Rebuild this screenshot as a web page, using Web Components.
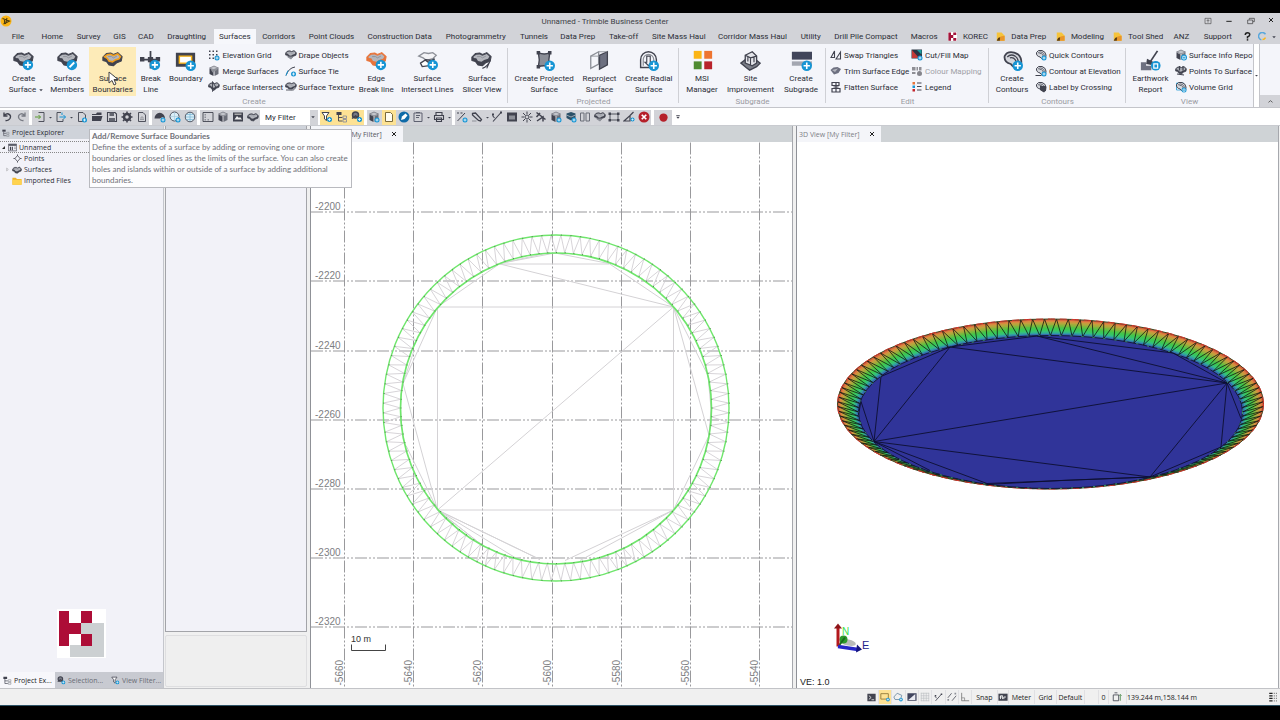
<!DOCTYPE html>
<html lang="en">
<head>
<meta charset="utf-8">
<title>Unnamed - Trimble Business Center</title>
<style>
  html { height: 100%; background: #000; }
  body { margin: 0; min-height: 100%; box-sizing: border-box; display: flex; font: 8px/11px Roboto, "Open Sans", sans-serif; color: #2b2d36; }
</style>
</head>
<body>
<tbc-app></tbc-app>
<script>
const D = '#41434f', G = '#8d9098', L = '#c3c5cb', B = '#1795d4', Y = '#fbb515', R = '#b5202a';

/* Icon parts, all on a 24-unit square */
const badge = (x = 17, y = 17, r = 6, k = 'plus') => `<circle cx="${x}" cy="${y}" r="${r}" fill="${B}"/>` + (
  k === 'plus' ? `<path d="M${x - r * .6} ${y}h${r * 1.2}M${x} ${y - r * .6}v${r * 1.2}" stroke="#fff" stroke-width="${r * .3}" fill="none"/>`
  : k === 'slash' ? `<path d="M${x - r * .45} ${y + r * .45}l${r * .9} ${-r * .9}" stroke="#fff" stroke-width="${r * .35}"/>`
  : `<path d="M${x - r * .4} ${y - r * .4}h${r * .8}v${r * .9}h${-r * .8}z" fill="none" stroke="#fff" stroke-width="${r * .25}"/>`);
const blob = (s = D, f = '#b4b6bd') => `<path d="M1 8 5 4l5-.5 3 1.500 5-2 5 4.500-1 5-5 2-4 3.500-5-1-3-4-4-1z" fill="${s}" stroke="${s}" stroke-width="1.200" stroke-linejoin="round"/><path d="M3 7.500l3-2 4-.5 3 1.500 5-2 3 3-1.500 2.500-4.500 1.500-3 2-4-1-2-3-3-.5z" fill="${f}"/><path d="M7 7.500h4l2 1.500 4-2" fill="none" stroke="${G}" stroke-width="1"/>`;
const ln = (d, c = D, w = 2) => `<path d="${d}" fill="none" stroke="${c}" stroke-width="${w}"/>`;
const fl = (d, c = D) => `<path d="${d}" fill="${c}"/>`;
const cube = fl('M3 6l9-4 9 4-9 4z', L) + fl('M3 7l8 4v11l-8-4z') + fl('M21 7l-8 4v11l8-4z', '#6c6f79') + ln('M3 6l9-4 9 4-9 4z', D, 1);
const page = ln('M5 3h9l5 5v13H5z', D, 1.8);
const curve = '<path d="M3 7q3-6 11-4 7 2 8 9 1 8-5 8-4 0-7-4-8-2-7-9z" fill="#d5d7dd" stroke="#41434f" stroke-width="2"/><path d="M6 8q4-4 9-1 4 3 4 9M9 9q4-1 6 2t1 5" fill="none" stroke="#41434f" stroke-width="1.400"/>';
const ICONS = {
  app: `<circle cx="12" cy="12" r="11" fill="${Y}"/><path d="M5 7l14 5-12 6M9 8v8M14 6l-3 12" fill="none" stroke="#4b3c10" stroke-width="2.200"/>`,
  surfAdd: blob() + badge(), surfEdit: blob() + badge(17, 17, 6, 'slash'), surfBound: blob() + ln('M3 7.500l3-2 4-.5 3 1.500 5-2 3 3-1.500 2.500-4.500 1.500-3 2-4-1-2-3z', '#f2a01c', 1.8),
  breakLine: ln('M1 11h21M12 1v20', D, 2) + fl('M0 8h5v5H0zM9 8h6v6H9zM18 8h5v5h-5z') + badge(),
  boundary: '<path d="M3 5h18v12H3z" fill="#fff" stroke="#41434f" stroke-width="4"/>' + ln('M5 7h14v8H5z', Y, 1.6) + badge(18, 18),
  edge: blob('#e8743a') + badge(), intersectLines: `<path d="M2 7l6-4 5 1 5-1 4 3-4 4-7 2-4-3z" fill="#f3f3f6" stroke="${G}" stroke-width="1.500"/><path d="M4 15l6-4 6 1 4-2-6 8-8 1z" fill="#fff" stroke="${D}" stroke-width="1.500"/>` + ln('M9 11l7 5') + badge(18, 17),
  slicer: blob() + ln('M13 21q6-2 9-9l-4 9', D, 1.3),
  projected: '<path d="M5 3q7 3 13 0-2 8 0 16-7-2-13 0 2-8 0-16z" fill="#8b8e97" stroke="#41434f" stroke-width="1.600"/>' + fl('M3 1h4v4H3zM16 1h4v4h-4zM3 17h4v4H3z') + badge(18, 18),
  reproject: `<path d="M2 7l9-5v14l-9 5z" fill="#f4f5fa" stroke="${G}" stroke-width="1.500"/><path d="M12 6l9-4v15l-9 5z" fill="#6d7080" stroke="${D}" stroke-width="1.500"/>` + ln('M2 7l10 0M11 2h10', G, 1),
  radial: ln('M3 20V11a9 9 0 0 1 18 0v9z', D, 1.6) + ln('M6 18v-7a6 6 0 0 1 12 0v7', G, 1.4) + ln('M10 7h4v7h2l-4 4-4-4h2z', D, 1.3) + badge(18, 18),
  msi: `<path d="M2 1h9v9H2z" fill="${Y}"/><path d="M14 1h9v9h-9z" fill="#ee7430"/><path d="M2 13h9v9H2z" fill="#4f8b31"/><path d="M14 13h9v9h-9z" fill="#b8232b"/>`,
  site: `<path d="M1 15l5-4h12l5 4-4 4-8 4-4-3z" fill="#7b7e88" stroke="${D}" stroke-width="1.500"/><path d="M6 6l8-4 5 5v8l-5 3-8-3z" fill="#e4e5ea" stroke="${D}" stroke-width="1.500"/>` + ln('M6 6l6 3 7-2M12 9v8M9 7v6M16 8v6', D, 1.3),
  subgrade: fl('M1 2h23v9H1z', '#41455a') + fl('M1 13h23v5H1z', '#a4a7b1') + badge(18, 18),
  contours: curve + badge(18, 18),
  earthwork: fl('M1 14h6v4h6v5H1z', '#6d7080') + ln('M20 1l-8 12', D, 2) + fl('M8 10l8 4-3 3-6-1z') + badge(18, 18, 5.5, 'box'),
  grid: fl('M2 3h3v3H2zM9 3h3v3H9zM16 3h3v3h-3zM2 10h3v3H2zM9 10h3v3H9zM16 10h3v3h-3zM2 17h3v3H2zM9 17h3v3H9z') + badge(18, 18, 5),
  merge: cube + fl('M6 10l12-4v4l-9 5z', G), surfInt: blob() + ln('M9 1v20l7-8z', D, 1.8),
  drape: blob() + fl('M3 15h14l-5 6z', G), tie: ln('M2 21Q7 6 20 4', D, 2) + ln('M2 21l4-10', B, 2) + badge(17, 18, 5), texture: blob() + ln('M2 18h14l5-5', G, 3),
  swap: ln('M2 17L9 4v13zM12 20L21 6v14z', D, 2.2), trim: fl('M1 10l6-5 8-1 7 4-5 8-9 3z', '#6d7080') + fl('M4 10l12-3-6 7z', '#b3b5bd'), flatten: ln('M4 3h14v6H4zM4 15h16v7H4zM12 3v18M7 12h10', D, 2.4),
  cutfill: fl('M1 1h21v18H1z', '#2a3443') + fl('M2 2l14 16H2z', '#c43a37') + fl('M12 2h9v9z', '#19a0a0') + badge(18, 18, 5), colmap: fl('M2 4h7v7H2zM11 4h3v7h-3zM16 4h5v7h-5zM2 14h7v4H2z', '#8f8f95') + `<circle cx="17" cy="17" r="5" fill="#85858c"/>`,
  legend: fl('M3 2h5v5H3z', '#e8743a') + fl('M3 9h5v5H3z', B) + fl('M3 16h5v5H3z', '#c3252d') + ln('M12 4h9M12 11h9M12 18h9', D, 2),
  quick: curve + badge(18, 18, 5), label: curve + fl('M10 10h12v9l-4 4-8-5z'), elev: curve + ln('M1 21h12') + badge(18, 18, 5),
  info: cube + badge(18, 17, 6, 'box'), points: blob() + ln('M9 2v9M16 2v9M4 18l14 2', D, 2.4), volume: `<path d="M3 4h14v14H3z" fill="#fff" stroke="${B}" stroke-width="1.500"/>` + curve + badge(18, 18, 5, 'box'),
  undo: ln('M6 3v7h7M6 10Q10 4 15 6q6 3 3 9-3 5-9 4', D, 2.8), redo: ln('M18 3v7h-7M18 10Q14 4 9 6q-6 3-3 9 3 5 9 4', '#777a83', 2.6),
  importF: ln('M9 3h11v18H9', D, 1.8) + ln('M2 12h11M9 8l4 4-4 4', '#5c9a33', 2), exportF: ln('M12 3H4v18h12v-5', D, 1.8) + ln('M9 12h12M17 8l4 4-4 4M14 3v5', B, 2), newF: page + badge(17, 18, 5),
  open: fl('M2 6h8l2-3h9v5H2zM2 10h21l-3 10H2z'), save: ln('M3 3h15l3 3v15H3z', D, 2.2) + fl('M7 3h9v7H7zM6 14h12v7H6z', '#62656f'), gear: `<circle cx="12" cy="12" r="6" fill="none" stroke="${D}" stroke-width="5"/>` + ln('M12 1v4M12 19v4M1 12h4M19 12h4M4 4l3 3M17 17l3 3M20 4l-3 3M4 20l3-3', D, 3), report: page + ln('M8 17h8M10 17v-5h4v5', G, 1.6),
  dome: fl('M1 15a10 11 0 0 1 21 0l-5-3-5 3z') + badge(18, 18, 5), globeAdd: '<circle cx="11" cy="11" r="9" fill="#d9edf7" stroke="#41434f" stroke-width="1.800"/>' + ln('M2 11h18M11 2v18', '#9fc4d8', 1.2) + badge(18, 18, 5), globe: '<circle cx="12" cy="12" r="9.500" fill="#d9edf7" stroke="#41434f" stroke-width="1.800"/>' + ln('M3 12h18M12 3v18M5 7h14M5 17h14', '#6fb0d2', 1.3),
  planv: ln('M2 3h20v18H2z', D, 1.8) + fl('M5 6h3v3H5zM5 11h3v3H5zM5 16h3v3H5zM11 16h3v3h-3z', G), cube, photo: fl('M2 3h20v18H2z') + fl('M5 17l5-7 4 4 2-2 4 5z', '#eee') + fl('M5 5h14v3H5z', '#aaa'), surf: '<g transform="translate(0 2)">' + blob() + '</g>',
  funnel: '<path d="M2 3h14l-5 7v9l-4-3v-6z" fill="#fff" stroke="#41434f" stroke-width="2"/>' + badge(17, 17, 5), tree: fl('M1 2h10v6H1z') + ln('M5 8v12h8M5 13h8', D, 1.8) + ln('M14 10h7v5h-7zM14 17h7v5h-7z', G, 1.8), select: '<circle cx="9" cy="8" r="6" fill="#777a85" stroke="#41434f" stroke-width="3"/>' + ln('M2 15l7-5 8 5', D, 3) + badge(17, 17, 5),
  cubeAdd: cube + badge(18, 18, 5), note: '<path d="M5 3h10l4 4v14H5z" fill="#fffdf3" stroke="#7b6a3a" stroke-width="2"/>', pen: '<circle cx="12" cy="12" r="11" fill="#0e6aa8"/>' + fl('M6 18l2-7 7-6 4 4-6 7z', '#fff'),
  clip: ln('M4 4h16v17H4zM8 3h8M8 9h8M8 13h6', '#5e6170', 2), print: ln('M6 9V3h12v6M3 9h18v8H3zM7 14h10v7H7z', D, 2.2),
  ptline: ln('M3 20L18 4M2 4h4M9 4h4', D, 2) + badge(18, 18, 5), pencil: ln('M3 5l6-1 12 13-2 3-4-1L3 8z', D, 2.6) + ln('M2 20h9', G, 2), vec: ln('M4 21L20 3M3 9l4 5', D, 2.2) + fl('M2 5h4v4H2zM18 1h4v4h-4z'),
  box: fl('M2 3h20v18H2z') + fl('M6 9h12v8H6z', G), burst: '<circle cx="12" cy="12" r="4" fill="none" stroke="#41434f" stroke-width="2"/>' + ln('M12 1v5M12 18v5M1 12h5M18 12h5M4 4l4 4M16 16l4 4M20 4l-4 4M4 20l4-4', D, 2), measure: ln('M3 3l18 14M3 12l7-8M4 20l12-8v9', D, 3), cubes: fl('M3 5l9-3 9 3v9l-9 5-9-5z', '#2b5068') + ln('M3 8l9 4 9-4', L, 1.5) + badge(18, 18, 5),
  book: ln('M3 4h7v16H3zM14 4h7v16h-7z', '#6b6e79', 2), frame: ln('M4 6h16v12H4z', D, 1.8) + fl('M1 3h5v5H1zM18 3h5v5h-5zM1 16h5v5H1zM18 16h5v5h-5z'), chart: ln('M2 20h12V9zM14 9l7-7', D, 2.4) + badge(19, 17, 4),
  stop: `<circle cx="12" cy="12" r="11" fill="${R}"/>` + ln('M7.500 7.500l9 9M16.500 7.500l-9 9', '#fff', 3.4), rec: `<circle cx="12" cy="12" r="9" fill="${R}"/>`,
  drop: fl('M5 9h14l-7 8z'), more: fl('M5 4h14v3H5zM5 11h14l-7 8z'),
  korec: '<path d="M0 0h24v24H0z" fill="#fff"/>' + fl('M1 1h7v22H1zM8 8h6v8H8zM14 1h8v7h-8zM14 16h8v7h-8z', '#a3143a'), macro: fl('M2 1h13l8 9v13H2z', '#f6c33b') + fl('M12 12l11-2v13H8z', '#e9952a') + fl('M2 23q3-9 9-9l-1 9z', '#5a3a12'),
  help: ln('M6 8q0-6 6-6t6 5q0 4-6 6v4', '#222', 4) + fl('M10 19h4v4h-4z', '#222'), sync: ln('M20 6A10 10 0 1 0 9 21', '#58a7dc', 4) + ln('M12 20q5 0 8-5', Y, 4),
  wup: ln('M3 4h18v16H3zM12 17V8M8 12l4-4 4 4', '#333', 1.6), wmin: ln('M4 13h16', '#222', 3), wmax: ln('M7 8V4h15v10h-4M2 9h15v11H2z', '#333', 2), wclose: ln('M4 4l16 16M20 4L4 20', '#222', 4), up: ln('M5 15l7-6 7 6', '#555', 3),
  diamond: ln('M12 4l7 8-7 8-7-8zM12 1v4M12 19v4M1 12h5M18 12h5', D, 2), folder: fl('M1 4h8l3 3h11v14H1z', '#f0b429') + fl('M1 9h22v12H1z', '#ffd34f'), project: ln('M1 3h22v18H1z', D, 1.8) + fl('M2 3h20v4H2zM5 10h3v9H5zM10 10h3v9h-3z') + ln('M16 11h5M16 15h5', G, 2), open3: fl('M19 5v14H5z', '#222'), closed3: ln('M8 5l8 7-8 7z', '#888', 2),
  term: fl('M1 2h22v20H1z') + ln('M5 7l6 5-6 5M12 18h7', '#fff', 2), selrect: ln('M2 4h18v13H2z', '#8b7434', 2) + badge(19, 18, 4.5), selpoly: ln('M2 12l8-9 11 5-3 10H5z', '#6a88a0', 2) + badge(19, 18, 4.5), half: fl('M1 3h22v18H1z', '#42465f') + fl('M3 19L20 5v14z', '#e9eaf2'), meshg: ln('M3 2v20M9 2v20M15 2v20M21 2v20M2 3h20M2 9h20M2 15h20M2 21h20', '#b9bbc0', 1.4),
  par: ln('M2 14l9-11M12 21l10-12', D, 1.8) + fl('M1 17h4v4H1zM18 2h4v4h-4z', G), perp: ln('M4 2v19h18', '#777', 2) + ln('M4 14h7v7', '#777', 1.6), snap2: fl('M1 4h22v17H1z') + ln('M6 17V9h5v8M14 17v-5h5M4 12h5', '#fff', 2), coord: ln('M3 7h13v14H3zM6 2h7', D, 2) + ln('M20 6v15M17 9l3-3 3 3', '#4c8c4c', 2), gripi: fl('M3 2h8v3H3zM3 8h8v3H3zM3 14h8v3H3zM3 20h8v3H3z', '#222') + fl('M14 2h2v3h-2zM14 8h2v3h-2zM14 14h2v3h-2zM14 20h2v3h-2zM19 2h2v3h-2zM19 8h2v3h-2zM19 14h2v3h-2zM19 20h2v3h-2z', '#666')
};

/* Base class: renders its template into an open shadow root */
class View extends HTMLElement {
  connectedCallback() {
    if (this.shadowRoot) return;
    this.attachShadow({ mode: 'open' }).innerHTML = `<style>:host{display:block;box-sizing:border-box}*{box-sizing:border-box}button,a,select,input{font:inherit;color:inherit;background:none;border:0;margin:0;padding:0;text-decoration:none;white-space:nowrap}${this.css()}</style>${this.html()}`;
  }
  css() { return ''; }
  html() { return '<slot></slot>'; }
  at(n, d = '') { return this.getAttribute(n) ?? d; }
}
const def = (n, c) => customElements.define(n, c);
const ic = (n, s = 12) => `<tbc-icon name="${n}" size="${s}"></tbc-icon>`;

def('tbc-icon', class extends View {
  css() { return `:host{width:${this.at('size', 12)}px;height:${this.at('size', 12)}px;flex:none}svg{display:block;width:100%;height:100%}`; }
  html() { return `<svg viewBox="0 0 24 24" aria-hidden="true">${ICONS[this.at('name')] || ''}</svg>`; }
});

def('tbc-title', class extends View {
  css() { return `:host{background:#d2d3d8;height:16px;display:grid;grid-template-columns:36px 1fr 100px;align-items:center;padding-right:6px}
    :host>*{min-width:0}.t{text-align:center;color:#3c3e46}nav{display:flex;justify-content:space-between;padding-left:30px}button{display:flex}`; }
  html() { return `${ic('app', 12)}<div class="t">Unnamed - Trimble Business Center</div><nav>
    <button aria-label="Ribbon options">${ic('wup', 8)}</button><button aria-label="Minimise">${ic('wmin', 8)}</button><button aria-label="Restore">${ic('wmax', 8)}</button><button aria-label="Close">${ic('wclose', 6)}</button></nav>`; }
});

def('tbc-tabs', class extends View {
  css() { return `:host{background:#d2d3d8;height:15px;display:flex;padding:0 3px 0 2px}
    a{flex:var(--w) 1 0;min-width:0;display:flex;align-items:center;justify-content:center;gap:6px;height:15px}a.on{background:#f6f7fb}`; }
  html() {
    const T = [['File', 32], ['Home', 37], ['Survey', 36], ['GIS', 26], ['CAD', 27], ['Draughting', 55], ['Surfaces', 42], ['Corridors', 46], ['Point Clouds', 60], ['Construction Data', 77], ['Photogrammetry', 76], ['Tunnels', 41], ['Data Prep', 47], ['Take-off', 45], ['Site Mass Haul', 66], ['Corridor Mass Haul', 82], ['Utility', 35], ['Drill Pile Compact', 76], ['Macros', 41], ['KOREC', 47, 'korec'], ['Data Prep', 60, 'macro'], ['Modeling', 58, 'macro'], ['Tool Shed', 59, 'macro'], ['ANZ', 28], ['Support', 45], ['', 14, 'help', 'Help'], ['', 17, 'sync', 'Updates'], ['', 6, 'drop', 'More']];
    return T.map(t => `<a href="#" style="--w:${t[1]}" class="${t[0] === 'Surfaces' ? 'on' : ''}" ${t[3] ? `aria-label="${t[3]}"` : ''}>${t[2] ? ic(t[2], t[2] === 'drop' ? 6 : 9) : ''}${t[0]}</a>`).join('');
  }
});

def('tbc-group', class extends View {
  css() { return `:host{flex:var(--w) 1 0;min-width:0;display:grid;grid-template-rows:50px 11px;padding:2px 0 1px;position:relative}
    :host::after{content:"";position:absolute;right:0;top:4px;bottom:4px;width:1px;background:#cfd0d5}
    :host([last])::after{display:none}
    .r{display:flex;min-width:0;padding:0 2px}.l{text-align:center;color:#9a9ba1}`; }
  html() { return `<div class="r"><slot></slot></div><div class="l">${this.at('label')}</div>`; }
});
def('tbc-big', class extends View {
  css() { return `:host{flex:var(--w) 1 0;min-width:0}button{width:100%;height:49px;display:flex;flex-direction:column;align-items:center;gap:2px;padding-top:3px;margin-top:1px;line-height:11px}
    :host([on]) button{background:#fdebb8}span{display:block;text-align:center}.d{display:flex;align-items:center;justify-content:center;gap:2px;margin-right:-6px}`; }
  html() {
    const p = this.at('text').split('|');
    return `<button>${ic(this.at('icon'), 21)}<span>${p[0]}${p[1] ? (this.hasAttribute('menu') ? `<span class="d">${p[1]}${ic('drop', 6)}</span>` : '<br>' + p[1]) : ''}</span></button>`;
  }
});
def('tbc-small', class extends View {
  css() { return `:host{flex:var(--w) 1 0;min-width:0;padding-top:1px}button{display:flex;align-items:center;gap:2px;height:16px;padding-left:2px}button.off{color:#a0a1a7}`; }
  html() { return this.at('items').split(';').map(s => { const [i, t] = s.split(','); return `<button class="${i === 'colmap' ? 'off' : ''}">${ic(i, 12)}${t}</button>`; }).join(''); }
});

def('tbc-ribbon', class extends View {
  css() { return `:host{background:#f4f5fa;height:64px;display:flex;border-bottom:1px solid #c4c5ca}
    .more{width:7px;display:flex;align-items:center;background:#fff;border-right:1px solid #c4c5ca;border-left:1px solid #c4c5ca}
    .end{width:20px;display:flex;align-items:flex-end}.end button{width:20px;height:12px;background:#d2d3d8;display:flex;align-items:center;justify-content:center}`; }
  html() {
    const big = (w, i, t, x = '') => `<tbc-big style="--w:${w}" icon="${i}" text="${t}" ${x}></tbc-big>`;
    const sm = (w, s) => `<tbc-small style="--w:${w}" items="${s}"></tbc-small>`;
    return `<tbc-group label="Create" style="--w:508">${big(43, 'surfAdd', 'Create|Surface', 'menu')}${big(44, 'surfEdit', 'Surface|Members')}${big(47, 'surfBound', 'Surface|Boundaries', 'on')}${big(29, 'breakLine', 'Break|Line')}${big(41, 'boundary', 'Boundary')}
      ${sm(76, 'grid,Elevation Grid;merge,Merge Surfaces;surfInt,Surface Intersect')}${sm(73, 'drape,Drape Objects;tie,Surface Tie;texture,Surface Texture')}${big(41, 'edge', 'Edge|Break line')}${big(61, 'intersectLines', 'Surface|Intersect Lines')}${big(48, 'slicer', 'Surface|Slicer View')}</tbc-group>
      <tbc-group label="Projected" style="--w:171">${big(68, 'projected', 'Create Projected|Surface')}${big(42, 'reproject', 'Reproject|Surface')}${big(56, 'radial', 'Create Radial|Surface')}</tbc-group>
      <tbc-group label="Subgrade" style="--w:147">${big(42, 'msi', 'MSI|Manager')}${big(55, 'site', 'Site|Improvement')}${big(46, 'subgrade', 'Create|Subgrade')}</tbc-group>
      <tbc-group label="Edit" style="--w:163">${sm(81, 'swap,Swap Triangles;trim,Trim Surface Edge;flatten,Flatten Surface')}${sm(78, 'cutfill,Cut/Fill Map;colmap,Colour Mapping;legend,Legend')}</tbc-group>
      <tbc-group label="Contours" style="--w:137">${big(42, 'contours', 'Create|Contours')}${sm(91, 'quick,Quick Contours;elev,Contour at Elevation;label,Label by Crossing')}</tbc-group>
      <tbc-group label="View" style="--w:127" last>${big(45, 'earthwork', 'Earthwork|Report')}${sm(78, 'info,Surface Info Repo;points,Points To Surface;volume,Volume Grid')}</tbc-group>
      <button class="more" aria-label="Scroll ribbon">${ic('drop', 5)}</button><div class="end"><button aria-label="Collapse ribbon">${ic('up', 7)}</button></div>`;
  }
});

def('tbc-toolbar', class extends View {
  css() { return `:host{background:#fff;height:18px;display:flex;align-items:center;padding-top:1px;border-bottom:1px solid #c9cbd0}
    .s{display:flex;width:var(--w);height:15px;background:#d2d3d8;margin-right:3px}.y,.s.y{background:#fde294}
    button{flex:15 1 0;min-width:0;display:flex;align-items:center;justify-content:center}button.a{flex-grow:6}
    select{appearance:none;width:47px;height:15px;padding-left:2px;background:#fff}.d{width:8px;height:15px;display:flex;align-items:center;background:#d2d3d8;margin-right:2px}`; }
  html() {
    const seg = (w, s, c = '') => `<div class="s ${c}" style="--w:${w}px">${s.split(' ').map(n => n === '-' ? `<button class="a" aria-label="Options">${ic('drop', 5)}</button>` : `<button class="${n === 'note' ? 'y' : ''}" aria-label="${n}">${ic(n, n === 'rec' ? 11 : 12)}</button>`).join('')}</div>`;
    return seg(29, 'undo redo') + seg(117, 'importF - exportF - newF open save gear report') + seg(45, 'dome globeAdd globe') + seg(60, 'planv cube photo surf') +
      `<select aria-label="View filter"><option>My Filter</option></select><span class="d">${ic('drop', 6)}</span>` +
      seg(44, 'funnel tree select', 'y') + seg(85, 'cubeAdd note pen clip - print -') + seg(196, 'ptline pencil - vec box burst measure cubeAdd cubes book drape frame chart stop') + seg(18, 'rec') + ic('more', 6);
  }
});

def('tbc-pane-head', class extends View {
  css() { return `:host{display:flex;align-items:center;gap:2px;height:13px;flex:none;background:#cfd3da;padding-left:2px;font:7px/11px "Open Sans",sans-serif}`; }
  html() { return `${ic('tree', 8)}<slot></slot>`; }
});

def('tbc-explorer', class extends View {
  css() { return `:host{display:flex;flex-direction:column;background:#f2f2f8;font:7px/11px "Open Sans",sans-serif;border-right:1px solid #c4c6cc;min-width:0}
    ul{list-style:none;margin:2px 0 0;padding:0;flex:1}li{display:flex;align-items:center;height:11px;gap:2px;padding-left:var(--p)}li.sel{border-block:1px dotted #888;height:12px}
    .logo{display:block;width:49px;height:49px;margin:0 0 14px 57px}
    nav{display:flex;height:16px;background:#c8cad1}nav button{flex:54 1 0;min-width:0;display:flex;align-items:center;gap:2px;padding:0 2px;color:#6a6c75;overflow:hidden}nav button.on{background:#f7f7fb;color:#222;padding-left:3px}`; }
  html() { return `<tbc-pane-head>Project Explorer</tbc-pane-head>
    <ul><li class="sel" style="--p:1px">${ic('open3', 5)}${ic('project', 9)}Unnamed</li><li style="--p:13px">${ic('diamond', 9)}Points</li><li style="--p:5px">${ic('closed3', 5)}${ic('surf', 10)}Surfaces</li><li style="--p:12px">${ic('folder', 10)}Imported Files</li></ul>
    <svg class="logo" viewBox="0 0 49 49" role="img" aria-label="KOREC"><path d="M0 0h49v49H0z" fill="#fff"/><path d="M24 14h23v34H13V36h11z" fill="#ccd0d2"/><path d="M2 2h10v12h12v11H12v12H2zM24 2h11v12H24zM24 25h11v12H24z" fill="#ad0d37"/></svg>
    <nav><button class="on">${ic('tree', 9)}Project Ex...</button><button>${ic('select', 9)}Selection...</button><button>${ic('funnel', 9)}View Filter...</button></nav>`; }
});

def('tbc-props', class extends View {
  css() { return `:host{display:grid;grid-template-rows:1fr 52px;gap:3px;background:#f0f0f0;padding:0 3px 1px 1px;min-width:0}
    .a{background:#f2f2f8;border:1px solid #a3a4a9;border-top:0}.b{background:#efefef;border:1px solid #dedee0;border-radius:2px}`; }
  html() { return `<div class="a"><tbc-pane-head></tbc-pane-head></div><div class="b"></div>`; }
});

def('tbc-view', class extends View {
  css() { return `:host{display:flex;flex-direction:column;min-width:0;background:#fff;border-left:1px solid #8f9197;border-right:1px solid #a6a8ad}
    header{height:16px;flex:none;display:flex;background:#cfd3d6}header div{display:flex;align-items:center;gap:9px;background:#f4f5f9;color:var(--c);font:7px/11px "Open Sans",sans-serif;padding:0 6px 0 var(--pl)}
    button{display:flex}.c{flex:1;min-height:0;display:flex}`; }
  html() { return `<header><div>${this.at('label')}<button aria-label="Close view">${ic('wclose', 6)}</button></div></header><div class="c"><slot></slot></div>`; }
});

def('tbc-plan', class extends View {
  css() { return `:host{flex:1;min-width:0}svg{display:block;width:100%;height:100%}text{font:10px "Liberation Sans",sans-serif;fill:#7d7e82}`; }
  html() {
    const N = 112, cx = 556, cy = 407.5, pt = (r, k) => [(cx + r * Math.cos(k * 2 * Math.PI / N)).toFixed(1), (cy + r * Math.sin(k * 2 * Math.PI / N)).toFixed(1)];
    let g = '', z = '', dots = '';
    [344.5, 413.5, 482.5, 552.5, 621.5, 690.5, 759.5].forEach((x, i) => { g += `<path d="M${x} 142V687"/>`; z += `<text transform="translate(${x - 2} 685) rotate(-90)">-${5660 - 20 * i}</text>`; });
    [211.5, 280.5, 350.5, 419.5, 488.5, 557.5, 626.5].forEach((y, i) => { g += `<path d="M311 ${y}H792"/>`; z += `<text x="315" y="${y - 2}">-${2200 + 20 * i}</text>`; });
    let d = '';
    for (let k = 0; k < N; k++) { d += `${k ? 'L' : 'M'}${pt(155.5, k)}L${pt(173, k + .5)}`; dots += `<path d="M${pt(173, k + .5)}h1M${pt(155.5, k)}h1"/>`; }
    return `<svg viewBox="311 142 481 545" preserveAspectRatio="xMidYMid meet" role="img" aria-label="Plan view of the surface">
      <g stroke="#99999c" stroke-dasharray="12 2 2 2 2 2" fill="none">${g}</g>${z}
      <g stroke="#d4d2d5" fill="none"><path d="${d}z" stroke="#cdc9ce" stroke-width=".8"/>
      <path d="M437.500 306.500h236v203h-236zM437.500 509.500L673.500 306.500M500 263.500h109M500 263.500L673.500 306.500L609 263L555 252.500L500 263L437.500 306.500L403 383L437.500 509.500L406 445M437.500 509.500L480 543L437.500 509.500L540 559L437.500 509.500L515 557M673.500 306.500L709 435L673.500 509.500L565 560M673.500 509.500L580 560M673.500 306.500L708 375L711 408L709 435M403 383L414 350M500 263l50-11"/></g>
      <g fill="none" stroke="#6fe66c" stroke-width="1.400"><circle cx="${cx}" cy="${cy}" r="173"/><circle cx="${cx}" cy="408" r="155.500" stroke-width="1.700"/></g><g stroke="#4f8f4a">${dots}</g>
      <text x="351" y="641" style="font-size:9px;fill:#333">10 m</text><path d="M351.500 644v6h34v-6" fill="none" stroke="#444"/></svg>`;
  }
});

def('tbc-scene', class extends View {
  css() { return `:host{flex:1;min-width:0}svg{display:block;width:100%;height:100%}text{font:9px "Liberation Sans",sans-serif}`; }
  html() {
    const N = 112, O = [1050.5, 403.5, 213, 85], I = [1050.5, 411.5, 192, 76.5];
    const mix = t => O.map((v, i) => v + (I[i] - v) * t), P = (e, k) => { const a = k * 2 * Math.PI / N - Math.PI / 2; return [(e[0] + e[2] * Math.cos(a)).toFixed(1), (e[1] + e[3] * Math.sin(a)).toFixed(1)]; };
    const cols = ['#d8603c', '#d98a40', '#bfa23e', '#a0ac3c', '#7ab83e', '#55c044', '#3fc650', '#38c760', '#35c07c', '#33a0a0', '#3468b0', '#303499'];
    const rings = cols.map((c, i) => { const e = mix(i / 11); return `<ellipse cx="${e[0].toFixed(1)}" cy="${e[1].toFixed(1)}" rx="${e[2].toFixed(1)}" ry="${e[3].toFixed(1)}" fill="${c}"/>`; }).join('');
    let d = '';
    for (let k = 0; k < N; k++) d += `${k ? 'L' : 'M'}${P(I, k)}L${P(O, k + .5)}`;
    const el = (e, x) => `<ellipse cx="${e[0]}" cy="${e[1]}" rx="${e[2]}" ry="${e[3]}" fill="none" ${x}/>`;
    return `<svg viewBox="797 142 481 545" preserveAspectRatio="xMidYMid meet" role="img" aria-label="3D view of the surface">
      ${rings}<path d="${d}z" fill="none" stroke="#10180f" stroke-width=".8"/>
      ${el(O, 'stroke="#3a4420" stroke-width="1"')}${el(O, 'stroke="#d8352c" stroke-width="1" stroke-dasharray="7 5"')}${el(I, 'stroke="#141a3a" stroke-width="1"')}${el(I, 'stroke="#3a9a6a" stroke-dasharray="2 9"')}
      <path d="M874 441L1227 382.500L950 346.500L874 441L881 376M874 441L861 401L858.500 414M1227 382.500L1037 335.500L1173 352.500L1227 382.500L1150 476.500L1221 446.500L1227 382.500L1241 418M874 441L1150 476.500L987 483L874 441L930 470M881 376L950 346.500L1037 335.500M987 484L1060 480L1150 476.500" fill="none" stroke="#0c0e30" stroke-width=".9"/>
      <ellipse cx="848" cy="642" rx="8" ry="3" fill="#b9bbb9" transform="rotate(12 848 642)"/><circle cx="843.500" cy="639" r="4" fill="#2d9a2b"/><path d="M839 645l6-8" stroke="#176d1a" stroke-width="2"/>
      <path d="M838 646v-19" stroke="#b3181c" stroke-width="3"/><path d="M834 628l4-5 4 5z" fill="#8e1418"/><path d="M838 646l20 3" stroke="#2626c8" stroke-width="3.500"/><path d="M857 644l5 5-6 3z" fill="#15157e"/>
      <text x="842" y="634" style="font-size:10px;fill:#3ce04a">N</text><text x="862" y="648" style="font-size:11px;fill:#22228c">E</text><text x="800" y="684" fill="#222">VE: 1.0</text></svg>`;
  }
});

def('tbc-tip', class extends View {
  css() { return `:host{position:absolute;left:89px;top:3px;width:263px;padding:1px 2px;background:#fdfdfe;border:1px solid #b9babf;color:#707178;font-family:Lato,sans-serif;z-index:2}b{display:block}p{margin:0;white-space:nowrap}`; }
  html() { return `<b>Add/Remove Surface Boundaries</b><p>Define the extents of a surface by adding or removing one or more<br>boundaries or closed lines as the limits of the surface. You can also create<br>holes and islands within or outside of a surface by adding additional<br>boundaries.</p>`; }
});

def('tbc-status', class extends View {
  css() { return `:host{height:18px;display:flex;align-items:center;background:#f0f0f0;border-top:1px solid #c2c3c7;border-bottom:1px solid #2d5366;padding:0 2px 0 0;font:7px/11px "Open Sans",sans-serif;color:#222}
    .x{flex:866}.y{flex:71}button{display:flex;align-items:center;justify-content:center;height:14px;width:var(--w);border-right:1px solid #e0e0e3}button.on{background:#fde294}`; }
  html() {
    const b = (w, c, k = '') => `<button class="${k}" style="--w:${w}px">${c}</button>`;
    return `<div class="x"></div>${b(13, ic('term', 9))}${b(13, ic('selrect', 10), 'on')}${b(14, ic('selpoly', 10))}${b(13, ic('half', 10))}${b(13, ic('meshg', 10))}${b(14, ic('vec', 9))}${b(13, ic('par', 10))}${b(13, ic('perp', 10))}${b(26, 'Snap')}${b(11, ic('snap2', 10))}${b(26, 'Meter')}${b(22, 'Grid')}${b(28, 'Default')}${b(14, '')}${b(10, '0')}${b(18, ic('coord', 10))}<span>139.244 m,158.144 m</span><div class="y"></div>${ic('gripi', 10)}`;
  }
});

def('tbc-app', class extends View {
  css() { return `:host{flex:1;min-width:0;display:flex;flex-direction:column;padding:13px 0 14px;position:relative}
    main{flex:1;min-height:300px;display:grid;grid-template-columns:164fr 146fr 483fr 3px 483fr;padding-right:1px;background:#f0f0f0;position:relative}
    .cur{position:absolute;left:108px;top:71px;width:11px;height:15px}
    .p{--c:#55575f;--pl:5px}.q{--c:#7c7e86;--pl:2px}`; }
  html() { return `<tbc-title></tbc-title><tbc-tabs></tbc-tabs><tbc-ribbon></tbc-ribbon><tbc-toolbar></tbc-toolbar>
    <main><tbc-explorer></tbc-explorer><tbc-props></tbc-props><tbc-view class="p" label="Plan View [My Filter]"><tbc-plan></tbc-plan></tbc-view><span></span><tbc-view class="q" label="3D View [My Filter]"><tbc-scene></tbc-scene></tbc-view><tbc-tip></tbc-tip></main>
    <tbc-status></tbc-status>
    <svg class="cur" viewBox="0 0 11 15" aria-hidden="true"><path d="M1 1v11l3-2.500 2 4.500 2-1-2-4.500h4z" fill="#fff" stroke="#444"/></svg>`; }
});
</script>
</body>
</html>
